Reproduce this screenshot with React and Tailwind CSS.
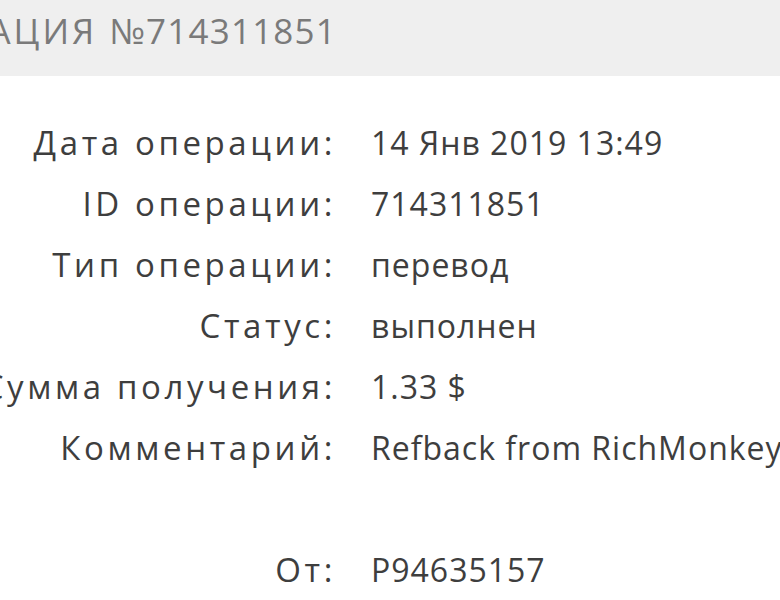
import React from 'react';

const rows = [
  { label: 'Дата операции:', value: '14 Янв 2019 13:49' },
  { label: 'ID операции:', value: '714311851' },
  { label: 'Тип операции:', value: 'перевод' },
  { label: 'Статус:', value: 'выполнен' },
  { label: 'Сумма получения:', value: '1.33 $' },
  { label: 'Комментарий:', value: 'Refback from RichMonkey' },
  { label: '', value: '' },
  { label: 'От:', value: 'P94635157' },
];

const App = () => {
  return (
    <div
      className="w-[780px] h-[600px] overflow-hidden bg-white text-[#3e3e3e]"
      style={{ fontFamily: '"Open Sans", "DejaVu Sans", sans-serif' }}
    >
      {/* Header */}
      <div className="h-[76px] bg-[#efefef] flex items-center justify-end pr-[443px] pb-[14px] overflow-hidden">
        <div className="flex shrink-0 whitespace-nowrap text-[35px] text-[#7a7a7a]">
          <span className="tracking-[3px]">ОПЕРАЦИЯ&nbsp;</span>
          <span className="tracking-[1.2px]">№714311851</span>
        </div>
      </div>

      {/* Details */}
      <div className="pt-[36px]">
        {rows.map((row, idx) => (
          <div key={idx} className="flex h-[61px] items-center">
            <div className="w-[336px] shrink-0 flex justify-end whitespace-nowrap text-[33px] tracking-[3.6px]">
              <span className="shrink-0">{row.label}</span>
            </div>
            <div className="pl-[35px] whitespace-nowrap text-[32px] tracking-[1px]">{row.value}</div>
          </div>
        ))}
      </div>
    </div>
  );
};

export default App;
